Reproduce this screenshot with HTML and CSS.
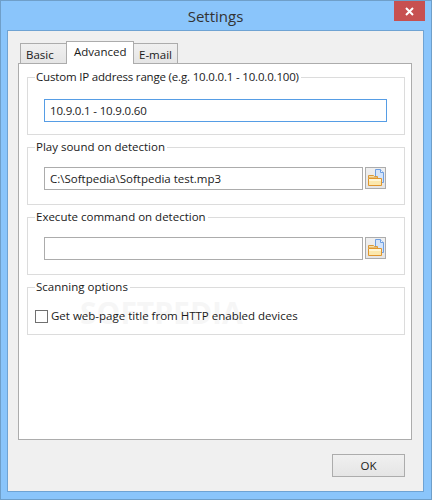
FILE: index.html
```html
<!DOCTYPE html>
<html lang="en">
<head>
  <meta charset="UTF-8">
  <title>Settings</title>
  <link rel="stylesheet" href="styles.css">
</head>
<body>
  <div class="window">
    <div class="titlebar">
      <span class="title">Settings</span>
      <button class="close" aria-label="Close">
        <svg width="9" height="9" viewBox="0 0 9 9"><path d="M1 1l7 7M8 1l-7 7" stroke="#fff" stroke-width="2"/></svg>
      </button>
    </div>
    <div class="content">
      <div class="tabs">
        <div class="tab tab-basic">Basic</div>
        <div class="tab tab-active">Advanced</div>
        <div class="tab tab-email">E-mail</div>
      </div>
      <div class="panel">
        <fieldset class="group">
          <legend class="tight">Custom IP address range (e.g. 10.0.0.1 - 10.0.0.100)</legend>
          <div class="row row-wide">
            <input class="field field-focus tight" type="text" value="10.9.0.1 - 10.9.0.60">
          </div>
        </fieldset>
        <fieldset class="group">
          <legend>Play sound on detection</legend>
          <div class="row">
            <input class="field" type="text" value="C:\Softpedia\Softpedia test.mp3">
            <button class="browse" aria-label="Browse">
              <svg width="18" height="18" viewBox="0 0 18 18">
                <path d="M8.500 .5h5l3 3v10h-8z" fill="#d3e4fb" stroke="#6f9fe0"/>
                <path d="M13.500 .5v3h3" fill="#eef5ff" stroke="#6f9fe0"/>
                <path d="M1.500 9v-2.500h5l1 1h3v1.500z" fill="#f6dfa8" stroke="#d99a3c"/>
                <path d="M1.500 9.500h13v7h-13z" fill="#fbe8ad" stroke="#e0962e"/>
                <path d="M2 10h12v2h-12z" fill="#fff6d6"/>
              </svg>
            </button>
          </div>
        </fieldset>
        <fieldset class="group">
          <legend>Execute command on detection</legend>
          <div class="row">
            <input class="field" type="text" value="">
            <button class="browse" aria-label="Browse">
              <svg width="18" height="18" viewBox="0 0 18 18">
                <path d="M8.500 .5h5l3 3v10h-8z" fill="#d3e4fb" stroke="#6f9fe0"/>
                <path d="M13.500 .5v3h3" fill="#eef5ff" stroke="#6f9fe0"/>
                <path d="M1.500 9v-2.500h5l1 1h3v1.500z" fill="#f6dfa8" stroke="#d99a3c"/>
                <path d="M1.500 9.500h13v7h-13z" fill="#fbe8ad" stroke="#e0962e"/>
                <path d="M2 10h12v2h-12z" fill="#fff6d6"/>
              </svg>
            </button>
          </div>
        </fieldset>
        <fieldset class="group group-options">
          <legend>Scanning options</legend>
          <label class="check"><span class="box"></span>Get web-page title from HTTP enabled devices</label>
        </fieldset>
        <div class="watermark">SOFTPEDIA</div>
      </div>
      <div class="footer">
        <button class="ok">OK</button>
      </div>
    </div>
  </div>
</body>
</html>
```

FILE: styles.css
```css
* {
  box-sizing: border-box;
}
html, body {
  margin: 0;
  height: 500px;
  overflow: hidden;
}
body {
  font-family: "Open Sans", "Liberation Sans", sans-serif;
  font-size: 11.5px;
  color: #1a1a1a;
}
.tight {
  letter-spacing: -.18px;
}
.window {
  width: 432px;
  height: 500px;
  background: #8ac5fb;
  border: 1px solid #6f9fc9;
  padding: 0 7px 7px 6px;
  display: flex;
  flex-direction: column;
}
.titlebar {
  height: 29px;
  flex: none;
  display: flex;
  justify-content: center;
  align-items: center;
  position: relative;
}
.title {
  font-size: 15px;
  color: #333;
}
.close {
  position: absolute;
  top: 0;
  right: -1px;
  width: 31px;
  height: 20px;
  background: #c75050;
  border: none;
  padding: 0;
  display: flex;
  align-items: center;
  justify-content: center;
}
.content {
  flex: 1;
  background: #f0f0f0;
  border: 1px solid #6fa3d3;
  padding: 10px 11px 0 10px;
  display: flex;
  flex-direction: column;
}
.tabs {
  display: flex;
  height: 22px;
  padding-left: 2px;
  align-items: flex-end;
  position: relative;
  z-index: 1;
}
.tab {
  height: 20px;
  border: 1px solid #acacac;
  border-bottom: none;
  background: linear-gradient(#f0f0f0, #e5e5e5);
  padding: 3px 0 0 5px;
  color: #1a1a1a;
}
.tab-basic {
  width: 46px;
  border-right: none;
}
.tab-active {
  width: 68px;
  height: 23px;
  margin-bottom: -1px;
  background: #fff;
  padding: 2px 0 0 7px;
}
.tab-email {
  width: 44px;
  border-left: none;
}
.panel {
  height: 377px;
  flex: none;
  background: #fff;
  border: 1px solid #acacac;
  padding: 5px 6px 0 8px;
  position: relative;
}
.group {
  margin: 0 0 4px;
  padding: 0 0 0 16px;
  height: 66px;
  border: 1px solid #dcdcdc;
  min-width: 0;
}
.group legend {
  padding: 0 2px 0 1px;
  margin-left: -9px;
  line-height: 16px;
  color: #1a1a1a;
}
.group-options {
  height: 56px;
  margin: 0;
  padding-left: 7px;
}
.group-options legend {
  margin-left: 0;
}
.row {
  display: flex;
  gap: 2px;
  margin-top: 12px;
  padding-right: 18px;
}
.row-wide {
  margin-top: 14px;
  padding-right: 17px;
}
.field {
  flex: 1;
  min-width: 0;
  height: 23px;
  border: 1px solid #acacac;
  padding: 0 5px;
  font: inherit;
  color: #1a1a1a;
  background: #fff;
}
.field-focus {
  border-color: #569de5;
}
.browse {
  flex: none;
  width: 21px;
  height: 22px;
  padding: 0;
  border: 1px solid #acacac;
  background: linear-gradient(#f0f0f0, #e5e5e5);
  display: flex;
  align-items: center;
  justify-content: center;
}
.check {
  display: flex;
  align-items: center;
  line-height: 16px;
  margin-top: 13px;
  color: #1a1a1a;
}
.box {
  width: 13px;
  height: 13px;
  background: #fff;
  border: 1px solid #707070;
  margin-right: 3px;
}
.watermark {
  position: absolute;
  left: 61px;
  top: 228px;
  font-size: 30px;
  font-weight: 700;
  color: #000;
  opacity: .03;
  pointer-events: none;
}
.footer {
  display: flex;
  justify-content: flex-end;
  padding: 14px 7px 0 0;
}
.ok {
  width: 73px;
  height: 23px;
  border: 1px solid #acacac;
  background: linear-gradient(#f0f0f0, #e5e5e5);
  font: inherit;
  color: #1a1a1a;
  padding: 0;
}
```
